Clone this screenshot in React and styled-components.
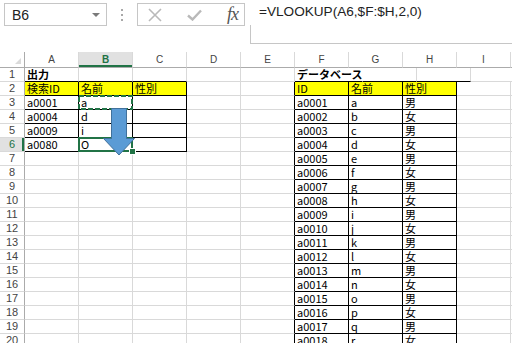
import React from "react";
import styled, { createGlobalStyle } from "styled-components";

const GlobalStyle = createGlobalStyle`
  html, body { margin: 0; padding: 0; background: #fff; overflow: hidden; }
  body { font-family: "Liberation Sans", "Noto Sans CJK JP", sans-serif; }
`;

const COLS = ["A", "B", "C", "D", "E", "F", "G", "H", "I", "J"];
const ROW_COUNT = 20;
const SEL_COL = 1;
const SEL_ROW = 6;

// bordered ranges (col index 0 = A)
const tables = [
  { c0: 0, c1: 2, r0: 2, r1: 6 },
  { c0: 5, c1: 7, r0: 2, r1: 99 },
];
const inTable = (c, r) =>
  tables.some(t => c >= t.c0 && c <= t.c1 && r >= t.r0 && r <= t.r1);

const YELLOW = "#ffff00";
const GRID = "#d9d9d9";

const cells = {
  "1:0": { text: "出力", bold: true },
  "1:5": { text: "データベース", bold: true, spill: true },
  "2:0": { text: "検索ID", fill: YELLOW },
  "2:1": { text: "名前", fill: YELLOW },
  "2:2": { text: "性別", fill: YELLOW },
  "2:5": { text: "ID", fill: YELLOW },
  "2:6": { text: "名前", fill: YELLOW },
  "2:7": { text: "性別", fill: YELLOW },
};
[["a0001", "a"], ["a0004", "d"], ["a0009", "i"], ["a0080", "O"]].forEach(([id, n], i) => {
  cells[`${i + 3}:0`] = { text: id };
  cells[`${i + 3}:1`] = { text: n };
});
for (let r = 3; r <= ROW_COUNT; r++) {
  const k = r - 3;
  cells[`${r}:5`] = { text: "a" + String(k + 1).padStart(4, "0") };
  cells[`${r}:6`] = { text: String.fromCharCode(97 + k) };
  cells[`${r}:7`] = { text: k % 2 === 0 ? "男" : "女" };
}

const Window = styled.div`
  width: 512px;
  height: 343px;
  overflow: hidden;
  display: flex;
  flex-direction: column;
  background: #fff;
`;

const FormulaArea = styled.div`
  flex: 0 0 52px;
  display: flex;
  align-items: flex-start;
  padding: 3px 0 0 4px;
  box-sizing: border-box;
`;

const NameBox = styled.div`
  width: 103px;
  height: 23px;
  box-sizing: border-box;
  border: 1px solid #c6c6c6;
  display: flex;
  align-items: center;
  justify-content: space-between;
  padding: 0 6px 0 7px;
  font: 14px "Liberation Sans", sans-serif;
  color: #222;
`;

const DropArrow = styled.span`
  width: 0;
  height: 0;
  border-left: 4px solid transparent;
  border-right: 4px solid transparent;
  border-top: 4px solid #7a7a7a;
`;

const Dots = styled.div`
  width: 30px;
  height: 23px;
  display: flex;
  flex-direction: column;
  align-items: center;
  justify-content: center;
  gap: 3px;
  & > i {
    display: block;
    width: 2px;
    height: 2px;
    background: #a8a8a8;
  }
`;

const ButtonBox = styled.div`
  width: 108px;
  height: 23px;
  box-sizing: border-box;
  border: 1px solid #c6c6c6;
  display: flex;
  align-items: center;
  justify-content: space-between;
  padding: 0 6px 0 10px;
`;

const Fx = styled.span`
  font: italic 18px "Liberation Serif", serif;
  color: #555;
  letter-spacing: -1px;
`;

const FormulaInput = styled.div`
  position: relative;
  margin: -3px 0 0 5px;
  flex: 1;
  height: 44px;
  box-sizing: border-box;
  border-bottom: 1px solid #c6c6c6;
  padding: 4px 0 0 9px;
  font: 13.6px "Liberation Sans", sans-serif;
  color: #222;
  &::before {
    content: "";
    position: absolute;
    left: 0;
    top: 25px;
    bottom: -1px;
    border-left: 1px solid #c6c6c6;
  }
`;

const Sheet = styled.div`
  position: relative;
  flex: 1;
  overflow: hidden;
`;

const Row = styled.div`
  display: flex;
  height: ${p => (p.$head ? 16 : 14)}px;
`;

const Corner = styled.div`
  flex: 0 0 25px;
  height: 16px;
  box-sizing: border-box;
  border-right: 1px solid #ababab;
  border-bottom: 1px solid #ababab;
  position: relative;
  &::after {
    content: "";
    position: absolute;
    right: 3px;
    bottom: 3px;
    border-left: 6px solid transparent;
    border-bottom: 6px solid #dadada;
  }
`;

const ColHead = styled.div`
  flex: 0 0 54px;
  height: 16px;
  box-sizing: border-box;
  border-right: 1px solid ${GRID};
  border-bottom: 1px solid #ababab;
  background: ${p => (p.$active ? "#e1e1e1" : "#fff")};
  box-shadow: ${p => (p.$active ? "inset 0 -2px 0 #217346" : "none")};
  color: ${p => (p.$active ? "#217346" : "#444")};
  font: ${p => (p.$active ? 700 : 400)} 10px/15px "Liberation Sans", sans-serif;
  text-align: center;
`;

const RowHead = styled.div`
  flex: 0 0 25px;
  height: 14px;
  box-sizing: border-box;
  border-right: 1px solid #ababab;
  border-bottom: 1px solid ${GRID};
  background: ${p => (p.$active ? "#e1e1e1" : "#fff")};
  box-shadow: ${p => (p.$active ? "inset -2px 0 0 #217346" : "none")};
  color: ${p => (p.$active ? "#217346" : "#444")};
  font: 11px/13px "Liberation Sans", sans-serif;
  text-align: center;
`;

const Cell = styled.div`
  flex: 0 0 54px;
  height: 14px;
  box-sizing: border-box;
  border-right: 1px solid ${p => p.$right};
  border-bottom: 1px solid ${p => p.$bottom};
  background: ${p => p.$fill || "transparent"};
  padding-left: 2px;
  color: #000;
  font: ${p => (p.$bold ? 700 : 400)} 11px/13px "Noto Sans CJK JP", sans-serif;
  white-space: nowrap;
`;

const Overlay = styled.svg`
  position: absolute;
  left: 0;
  top: 0;
  pointer-events: none;
`;

function CancelIcon() {
  return (
    <svg width="14" height="14" viewBox="0 0 14 14">
      <path d="M1 1 L13 13 M13 1 L1 13" stroke="#b9b9b9" strokeWidth="1.6" fill="none" />
    </svg>
  );
}

function CheckIcon() {
  return (
    <svg width="15" height="12" viewBox="0 0 15 12">
      <path d="M1 6.5 L5.5 10.5 L14 1.5" stroke="#b9b9b9" strokeWidth="2.4" fill="none" />
    </svg>
  );
}

function SheetRow({ r }) {
  return (
    <Row>
      <RowHead $active={r === SEL_ROW}>{r}</RowHead>
      {COLS.map((_, c) => {
        const cell = cells[`${r}:${c}`] || {};
        let right = inTable(c, r) || inTable(c + 1, r) ? "#000" : GRID;
        if (cell.spill) right = "transparent";
        const bottom = inTable(c, r) || inTable(c, r + 1) ? "#000" : GRID;
        return (
          <Cell key={c} $right={right} $bottom={bottom} $fill={cell.fill} $bold={cell.bold}>
            {cell.text}
          </Cell>
        );
      })}
    </Row>
  );
}

export default function App() {
  const rows = Array.from({ length: ROW_COUNT }, (_, i) => i + 1);
  return (
    <Window>
      <GlobalStyle />
      <FormulaArea>
        <NameBox>
          B6
          <DropArrow />
        </NameBox>
        <Dots>
          <i />
          <i />
          <i />
        </Dots>
        <ButtonBox>
          <CancelIcon />
          <CheckIcon />
          <Fx>fx</Fx>
        </ButtonBox>
        <FormulaInput>=VLOOKUP(A6,$F:$H,2,0)</FormulaInput>
      </FormulaArea>
      <Sheet>
        <Row $head>
          <Corner />
          {COLS.map((c, i) => (
            <ColHead key={c} $active={i === SEL_COL}>
              {c}
            </ColHead>
          ))}
        </Row>
        {rows.map(r => (
          <SheetRow key={r} r={r} />
        ))}
        <Overlay width="512" height="291">
          {/* copy marquee around B3 */}
          <rect x="79" y="44" width="53" height="13" fill="none" stroke="#217346" strokeWidth="2" strokeDasharray="5 2" />
          {/* active cell B6 */}
          <rect x="79" y="86" width="53" height="13" fill="none" stroke="#217346" strokeWidth="2" />
          {/* arrow drawn over the selection */}
          <path
            d="M111.5 56.5 H126.5 V86.5 H134.5 L119 103 L103.5 86.5 H111.5 Z"
            fill="#5b9bd5"
            stroke="#41719c"
            strokeWidth="1"
          />
          <rect x="129.5" y="96.5" width="6" height="6" fill="#217346" stroke="#fff" strokeWidth="1" />
        </Overlay>
      </Sheet>
    </Window>
  );
}
